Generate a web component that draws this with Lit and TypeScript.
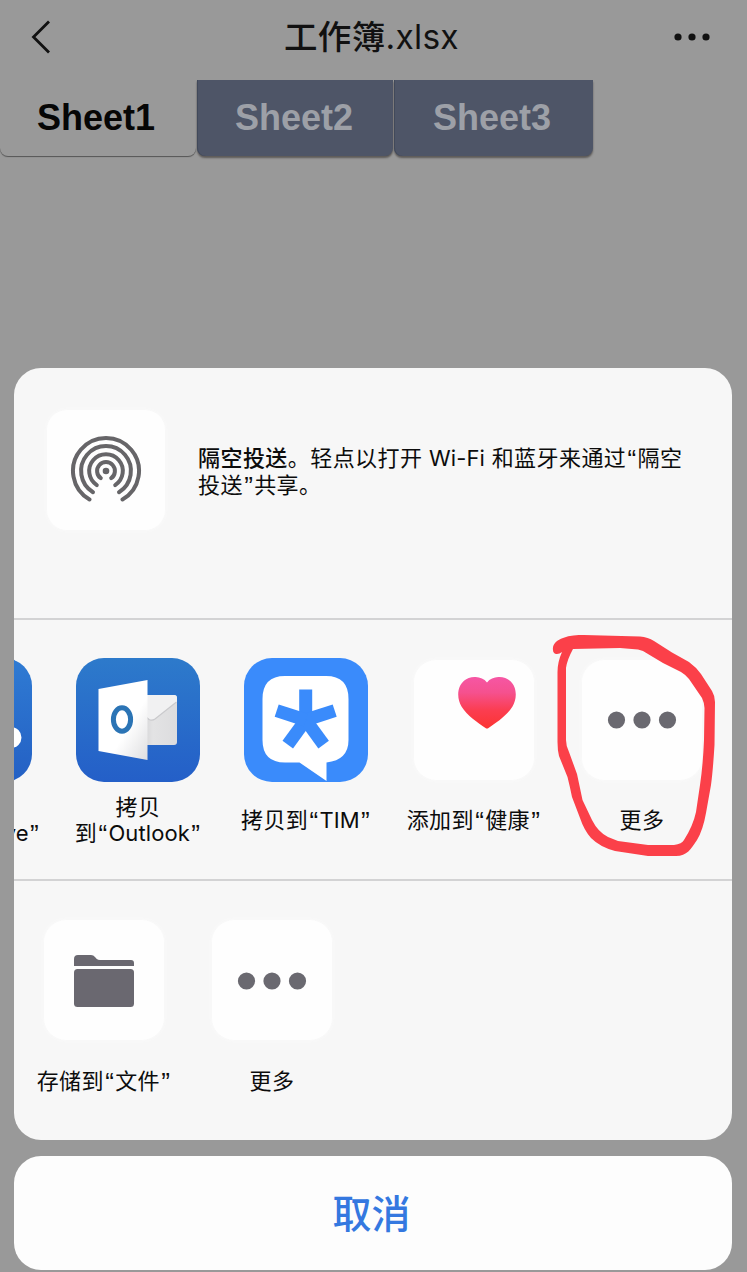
import { LitElement, html, css, svg } from "lit";
import { customElement, property } from "lit/decorators.js";

const dots = html`<svg class="dots" width="70" height="18" viewBox="0 0 70 18" fill="#6a6970">
  <circle cx="9.5" cy="9" r="8.6" /><circle cx="35" cy="9" r="8.6" /><circle cx="60.5" cy="9" r="8.6" />
</svg>`;

const airdrop = html`<svg width="72" height="72" viewBox="-36 -36 72 72" fill="none" stroke="#666568" stroke-width="4" stroke-linecap="round">
  <circle cx="0" cy="0" r="3.3" fill="#666568" stroke="none" />
  <path d="M-5.2 7.2A8.9 8.9 0 1 1 5.2 7.2" />
  <path d="M-9.2 14.1A16.8 16.8 0 1 1 9.2 14.1" />
  <path d="M-13 21.2A24.9 24.9 0 1 1 13 21.2" />
  <path d="M-16.5 28.5A33 33 0 1 1 16.5 28.5" />
</svg>`;

const oneDrive = html`<svg width="124" height="124" viewBox="0 0 124 124">
  <defs><linearGradient id="od" x1="0" y1="0" x2="0" y2="1"><stop offset="0" stop-color="#2f7bd3" /><stop offset="1" stop-color="#2460c4" /></linearGradient></defs>
  <rect width="124" height="124" rx="28" fill="url(#od)" />
  <path d="M36 90a15 15 0 0 1 4-29a24 24 0 0 1 43-5a18 18 0 0 1 20 13a10.5 10.5 0 0 1 0 21z" fill="#fff" />
</svg>`;

const outlook = html`<svg width="124" height="124" viewBox="0 0 124 124">
  <defs>
    <linearGradient id="ol" x1="0" y1="0" x2="0" y2="1"><stop offset="0" stop-color="#2d7acb" /><stop offset="1" stop-color="#245fc8" /></linearGradient>
    <linearGradient id="dr" x1="0" y1="0" x2="1" y2="1"><stop offset="0.6" stop-color="#fff" /><stop offset="1" stop-color="#dedee0" /></linearGradient>
    <linearGradient id="en" x1="0" y1="0" x2="1" y2="0"><stop offset="0" stop-color="#cfcfd1" /><stop offset="0.35" stop-color="#e3e3e4" /><stop offset="1" stop-color="#dcdcde" /></linearGradient>
  </defs>
  <rect width="124" height="124" rx="28" fill="url(#ol)" />
  <rect x="64" y="37" width="37" height="50" rx="3" fill="url(#en)" />
  <path d="M70 37h28q3 0 3 3v4L79 61q-3 2.500-6 0l-3-3z" fill="#f1f1f2" />
  <path d="M70 59l3 2.500q3 1.500 6-.5L100.500 44" fill="none" stroke="#c9c9cc" stroke-width="1.200" />
  <path d="M22.500 31L71.500 22v80L22.500 93z" fill="url(#dr)" />
  <ellipse cx="46" cy="61.500" rx="8.600" ry="11.700" fill="none" stroke="#2b74b5" stroke-width="5" />
</svg>`;

const arms = [0, 72, 144, 216, 288];
const tim = html`<svg width="124" height="124" viewBox="0 0 124 124">
  <rect width="124" height="124" rx="28" fill="#3a8bfb" />
  <path d="M41 18H82Q104.500 18 104.500 41V82Q104.500 102 82.500 104.500V123L55.500 104.500H41Q18.500 104.500 18.500 82V41Q18.500 18 41 18z" fill="#fff" />
  ${arms.map((a) => svg`<path d="M55.200 31.500h13V62h-13z" fill="#3a8bfb" transform="rotate(${a} 61.700 62)" />`)}
</svg>`;

const heart = html`<svg class="heart" width="58" height="52" viewBox="0 0 58 52">
  <defs><linearGradient id="ht" x1="0" y1="0" x2="0" y2="1"><stop offset="0" stop-color="#f656a4" /><stop offset="0.3" stop-color="#f5518f" /><stop offset="0.65" stop-color="#fb3d50" /><stop offset="1" stop-color="#fc3432" /></linearGradient></defs>
  <path d="M29 5.500C34.500-1.800 46-1.300 52 3.800C59.500 10.500 59 22 54.500 29.500C49 38.500 38 46 30.500 51Q29 52 27.500 51C20 46 9 38.500 3.500 29.500C-1 22-1.500 10.500 6 3.800C12-1.300 23.500-1.800 29 5.500z" fill="url(#ht)" />
</svg>`;

const folder = html`<svg class="folder" width="60" height="52" viewBox="0 0 60 52" fill="#6a6870">
  <path d="M0 11V4Q0 0 4 0H17Q19.500 0 21 2L22.500 3.700Q24 5 26 5H57Q60 5 60 8V11z" />
  <rect y="14" width="60" height="38" rx="3.500" />
</svg>`;

// Curly quotes and Latin runs get their own font and tracking inside Chinese text.
const typeset = (text: string) =>
  text
    .split(/([“”]|[A-Za-z-]+)/)
    .filter((part) => part)
    .map((part) => {
      if (/[“”]/.test(part)) return html`<span class="q">${part}</span>`;
      if (/[A-Za-z]/.test(part)) return html`<span class="lat">${part}</span>`;
      return part;
    });

const runs = css`
  .q { padding: 0 1.300px; font-family: "Liberation Sans", sans-serif; font-size: 26px; letter-spacing: 0; vertical-align: -2px; }
  .lat { letter-spacing: 0.100px; }
`;

@customElement("share-item")
export class ShareItem extends LitElement {
  @property({ attribute: false }) icon: unknown;
  @property({ attribute: false }) lines: string[] = [];
  @property({ type: Boolean }) plain = false;

  static styles = [
    runs,
    css`
      :host { display: flex; flex-direction: column; align-items: center; flex: none; width: 168px; }
      .tile { display: flex; align-items: center; justify-content: center; width: 124px; height: 124px; }
      .plain { width: 120px; height: 120px; margin: 2px 0; border-radius: 22px; background: #fefefe; box-shadow: 0 0 4px #fbfbfb; }
      .heart { margin: -34px 0 0 26px; }
      .folder { margin-top: 2px; }
      .dots { margin-top: var(--dots-top, 0); }
      .label { display: flex; flex-direction: column; justify-content: center; align-items: center; height: 52px; margin-top: var(--label-top, 12px); margin-right: var(--label-right, 0); font-size: 22px; line-height: 26px; letter-spacing: 0.4px; white-space: nowrap; color: #0c0c0c; }
      .label span { line-height: 0; }
      .label .line { line-height: 26px; height: 26px; }
      svg { display: block; }
    `,
  ];

  render() {
    return html`<div class="tile ${this.plain ? "plain" : ""}">${this.icon}</div>
      <div class="label">${this.lines.map((l) => html`<div class="line">${typeset(l)}</div>`)}</div>`;
  }
}

@customElement("app-root")
export class AppRoot extends LitElement {
  static styles = [
    runs,
    css`
      :host { display: flex; flex-direction: column; position: relative; box-sizing: border-box; width: 747px; height: 1272px; overflow: hidden; background: #999; font-family: Inter, "Noto Sans CJK SC", sans-serif; }
      svg { display: block; }
      .nav { display: flex; align-items: center; justify-content: space-between; padding: 0 37px 6px 31px; height: 80px; box-sizing: border-box; }
      .title { margin-left: 18px; font-size: 33.5px; font-weight: 500; line-height: 48px; letter-spacing: 0.3px; color: #111; }
      .title .ext { font-weight: 400; }
      .tabs { display: flex; gap: 1px; height: 76px; }
      .tab { box-sizing: border-box; width: 196px; padding-left: 38px; line-height: 76px; font-family: "Liberation Sans", sans-serif; font-weight: 700; font-size: 36px; color: #9da0a7; background: #4e5567; border-radius: 0 0 8px 8px; box-shadow: 0 2px 2px #5d5a58, inset 1px 0 0 #41495a; }
      .tab.on { width: 196px; padding-left: 37px; color: #060606; background: #999; box-shadow: 0 1px 1px #555; }
      .tab.last { width: 199px; padding-left: 39px; }
      .sheet { display: flex; flex-direction: column; box-sizing: border-box; width: 718px; height: 772px; margin: 212px 0 0 14px; border-radius: 27px; overflow: hidden; background: #f7f7f7; }
      .air { display: flex; box-sizing: border-box; height: 250px; padding: 42px 0 0 33px; }
      .airtile { display: flex; align-items: center; justify-content: center; box-sizing: border-box; width: 118px; height: 120px; padding-top: 2px; border-radius: 20px; background: #fefefe; box-shadow: 0 0 4px #fbfbfb; }
      .airtext { margin: 35px 0 0 33px; font-size: 22px; line-height: 27px; letter-spacing: 0.44px; white-space: nowrap; color: #0c0c0c; }
      .airtext .row { height: 27px; }
      .airtext span { line-height: 0; }
      .airtext b { font-weight: 500; }
      .apps { display: flex; box-sizing: border-box; height: 263px; padding-top: 38px; border-top: 2px solid #d3d3d4; border-bottom: 2px solid #d3d3d4; }
      .apps share-item:first-child { margin-left: -128px; --label-right: 3px; }
      .actions { display: flex; padding: 37px 0 0 6px; --label-top: 13px; --dots-top: 2px; }
      .cancel { display: flex; align-items: center; justify-content: center; box-sizing: border-box; width: 718px; height: 114px; margin: 16px 0 0 14px; padding: 0 3px 5px 0; border-radius: 27px; background: #fdfdfd; font-size: 39px; font-weight: 500; color: #3478e0; }
      .mark { position: absolute; left: 540px; top: 620px; }
    `,
  ];

  render() {
    return html`
      <div class="nav">
        <svg width="20" height="34" viewBox="0 0 20 34" fill="none" stroke="#111" stroke-width="2.800"><path d="M18 1.500L2.500 17L18 32.500" /></svg>
        <div class="title">工作簿<span class="ext">.xlsx</span></div>
        <svg width="36" height="8" viewBox="0 0 36 8" fill="#111"><circle cx="4" cy="4" r="3.600" /><circle cx="18" cy="4" r="3.600" /><circle cx="32" cy="4" r="3.600" /></svg>
      </div>
      <div class="tabs">
        <div class="tab on">Sheet1</div>
        <div class="tab">Sheet2</div>
        <div class="tab last">Sheet3</div>
      </div>
      <div class="sheet">
        <div class="air">
          <div class="airtile">${airdrop}</div>
          <div class="airtext">
            <div class="row"><b>隔空投送</b>${typeset("。轻点以打开 Wi-Fi 和蓝牙来通过“隔空")}</div>
            <div class="row">${typeset("投送”共享。")}</div>
          </div>
        </div>
        <div class="apps">
          <share-item .icon=${oneDrive} .lines=${["拷贝", "到“OneDrive”"]}></share-item>
          <share-item .icon=${outlook} .lines=${["拷贝", "到“Outlook”"]}></share-item>
          <share-item .icon=${tim} .lines=${["拷贝到“TIM”"]}></share-item>
          <share-item plain .icon=${heart} .lines=${["添加到“健康”"]}></share-item>
          <share-item plain .icon=${dots} .lines=${["更多"]}></share-item>
        </div>
        <div class="actions">
          <share-item plain .icon=${folder} .lines=${["存储到“文件”"]}></share-item>
          <share-item plain .icon=${dots} .lines=${["更多"]}></share-item>
        </div>
      </div>
      <div class="cancel">取消</div>
      <svg class="mark" width="190" height="250" viewBox="540 620 190 250">
        <path fill-rule="evenodd" fill="#fb4049" d="M553 650C552 644 557 640 563 638C570 635 577 635 584 635L640 636.500Q648 637 654 641L672 652.500L689 662Q696 667 701 674L712 691Q715 696 715 702L714.500 745Q713 770 711 785L706 813Q703 830 697 840C691 849 687 856 676 856H648L615 851Q600 847 591 838Q584 830 580 818L572 797Q570 787 567.500 777L559 756Q557.500 750 557.500 742V672Q557.500 662 562 652Q559 654.500 556 654Q553 653 553 650z
          M573 649Q567 660 566 668V740Q566 746 569 752L577 774Q580 788 582.500 800L592 820Q598 832 608 837L618 841L648 845H674Q682 844 684 840Q693 826 696 812L700 785Q703 765 704 740L704.500 708Q704 702 702 698L689 679Q686 675 681 672L663 663L648 654Q643 650 638 649.500L620 648z" />
      </svg>`;
  }
}
